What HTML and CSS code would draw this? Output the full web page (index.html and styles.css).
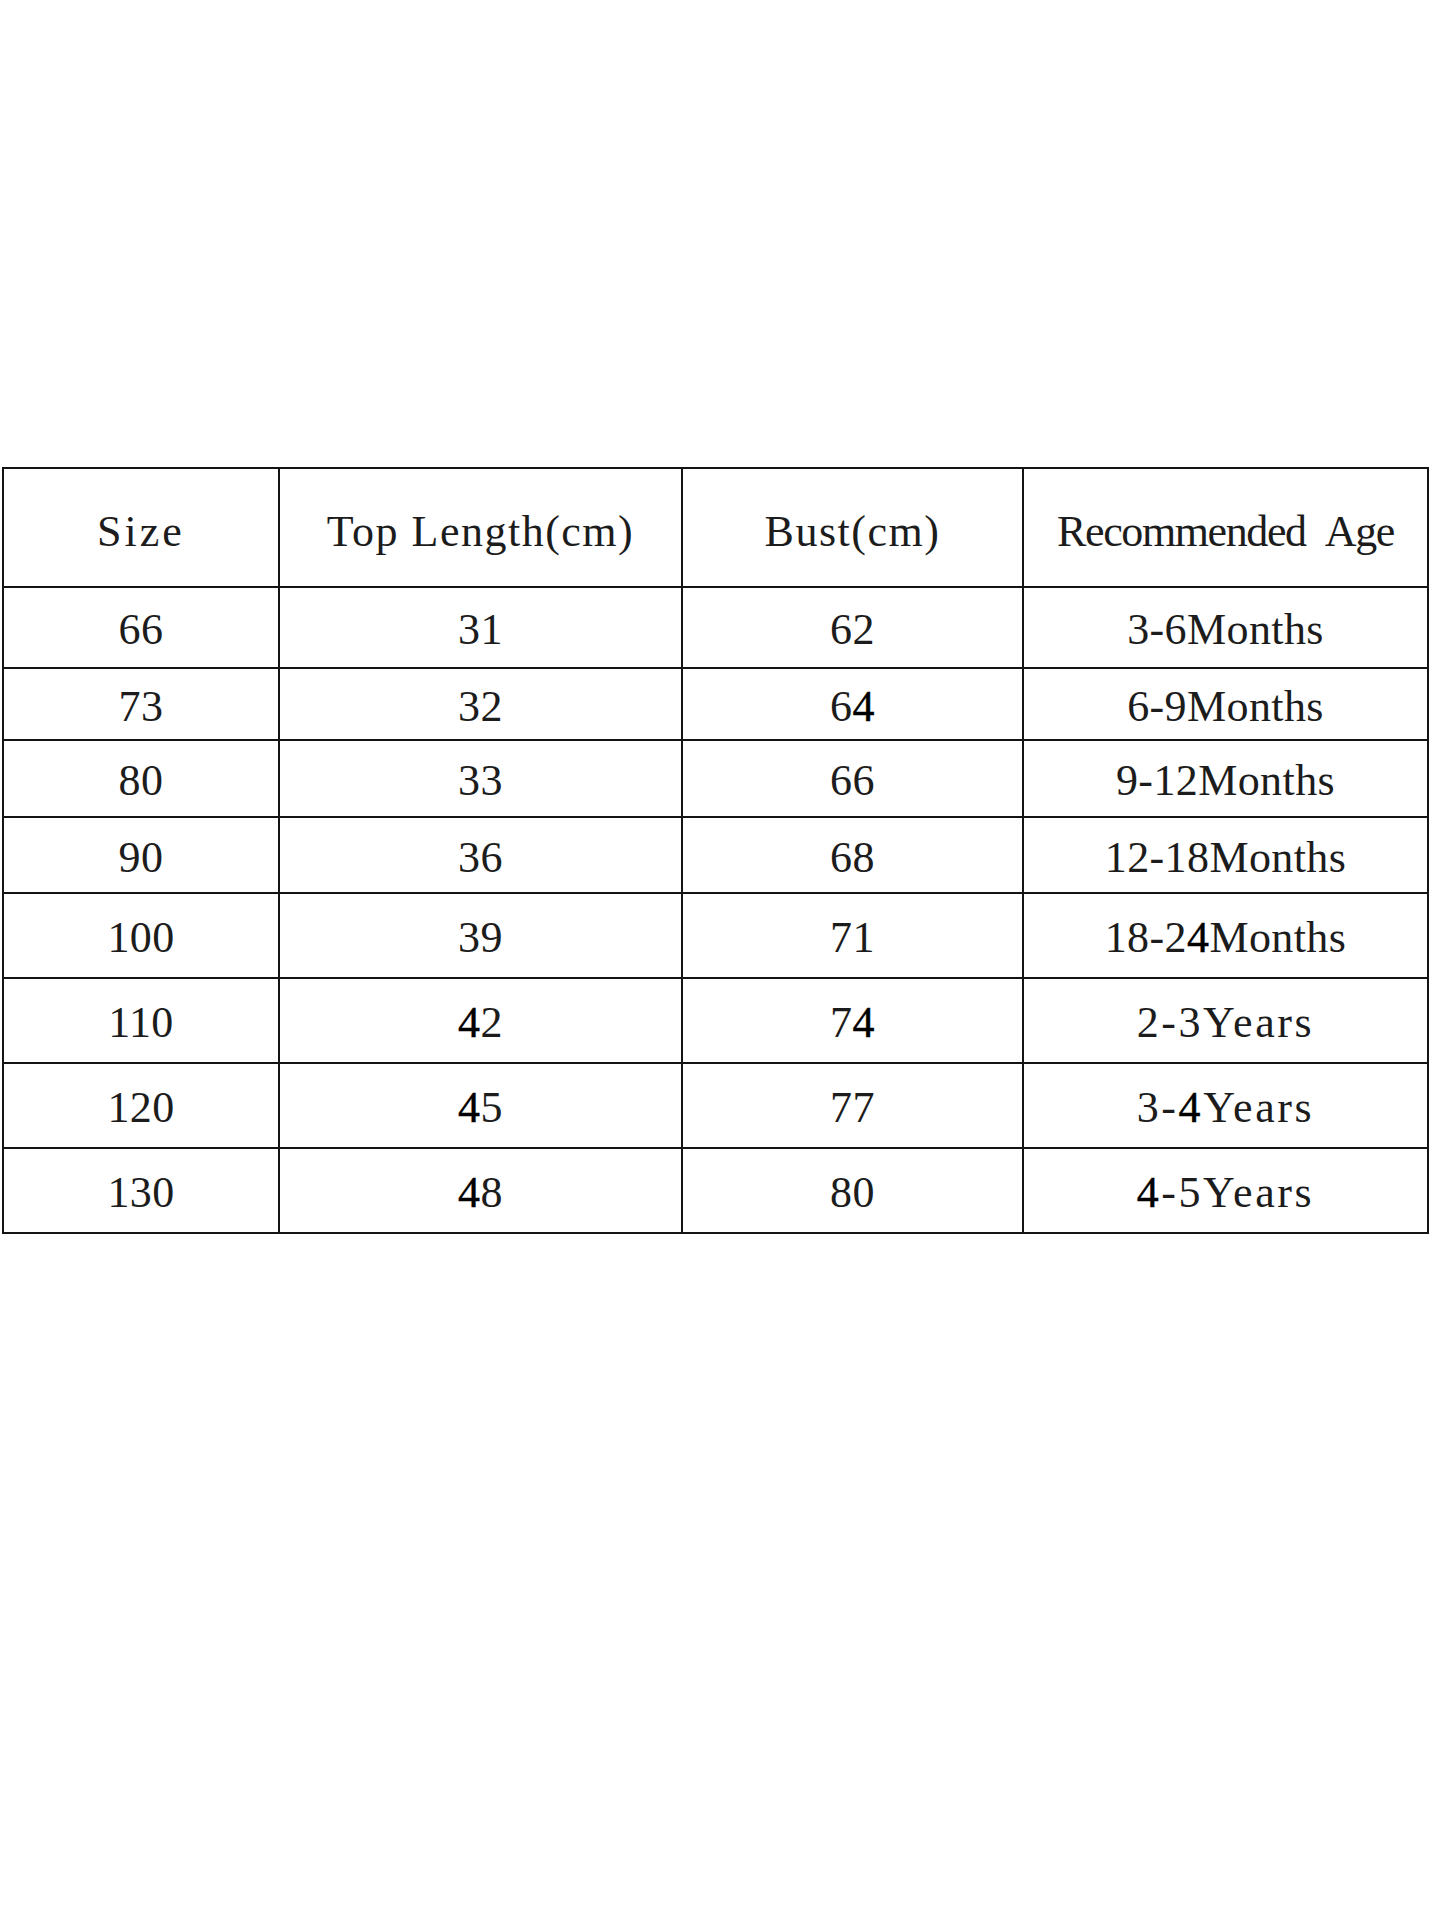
FILE: index.html
```html
<!DOCTYPE html>
<html lang="en">
<head>
<meta charset="utf-8">
<title>Size Chart</title>
<link rel="stylesheet" href="styles.css">
</head>
<body>
<main class="page">
  <div class="chart">
    <div class="cell head head-size">Size</div>
    <div class="cell head">Top Length(cm)</div>
    <div class="cell head">Bust(cm)</div>
    <div class="cell head head-age">Recommended Age</div>

    <div class="cell">66</div>
    <div class="cell">31</div>
    <div class="cell">62</div>
    <div class="cell">3-6Months</div>

    <div class="cell">73</div>
    <div class="cell">32</div>
    <div class="cell">6<span class="alt">4</span></div>
    <div class="cell">6-9Months</div>

    <div class="cell">80</div>
    <div class="cell">33</div>
    <div class="cell">66</div>
    <div class="cell">9-12Months</div>

    <div class="cell">90</div>
    <div class="cell">36</div>
    <div class="cell">68</div>
    <div class="cell">12-18Months</div>

    <div class="cell">100</div>
    <div class="cell">39</div>
    <div class="cell">71</div>
    <div class="cell">18-2<span class="alt">4</span>Months</div>

    <div class="cell">110</div>
    <div class="cell"><span class="alt">4</span>2</div>
    <div class="cell">7<span class="alt">4</span></div>
    <div class="cell years">2-3Years</div>

    <div class="cell">120</div>
    <div class="cell"><span class="alt">4</span>5</div>
    <div class="cell">77</div>
    <div class="cell years">3-<span class="alt">4</span>Years</div>

    <div class="cell">130</div>
    <div class="cell"><span class="alt">4</span>8</div>
    <div class="cell">80</div>
    <div class="cell years"><span class="alt">4</span>-5Years</div>
  </div>
</main>
</body>
</html>
```
FILE: styles.css
```css
html, body {
  margin: 0;
  padding: 0;
  background: #ffffff;
}

.page {
  padding-top: 467px;
  padding-left: 2px;
}

.chart {
  display: grid;
  width: 1427px;
  box-sizing: border-box;
  padding: 2px;
  gap: 2px;
  background: #141414;
  grid-template-columns: 274px 401px 339px 403px;
  grid-template-rows: 117px 79px 70px 75px 74px 83px 83px 83px 83px;
}

.cell {
  background: #ffffff;
  display: flex;
  align-items: center;
  justify-content: center;
  font-family: "Liberation Serif", "DejaVu Serif", serif;
  font-size: 44px;
  letter-spacing: 0.4px;
  padding-top: 5px;
  color: #1c1c1c;
  line-height: 1;
}

.head {
  padding-top: 9px;
  letter-spacing: 1.5px;
}

.head-size {
  letter-spacing: 3px;
}

.head-age {
  letter-spacing: -1.4px;
  word-spacing: 12px;
}

.years {
  letter-spacing: 2.6px;
}

.alt {
  color: #000000;
  -webkit-text-stroke: 0.4px #000000;
  letter-spacing: inherit;
}
```
